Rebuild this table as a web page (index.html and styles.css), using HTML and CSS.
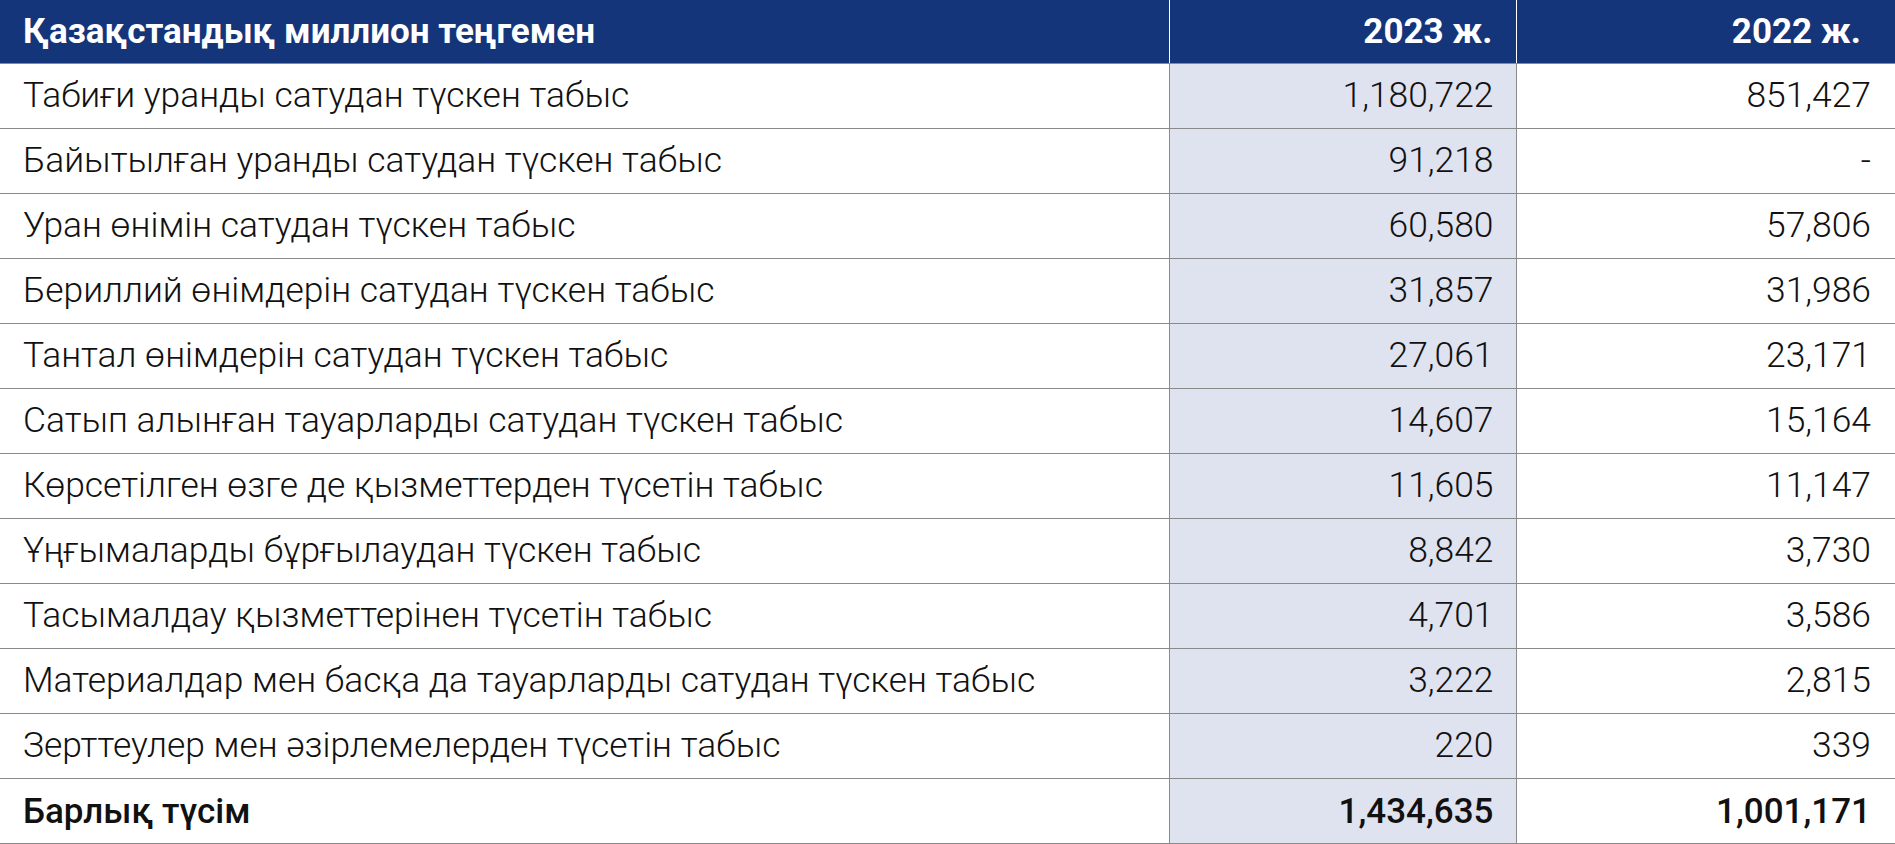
FILE: index.html
```html
<!DOCTYPE html>
<html lang="kk">
<head>
<meta charset="utf-8">
<link rel="stylesheet" href="styles.css">
</head>
<body>
<table class="tbl">
  <colgroup>
    <col class="c-name">
    <col class="c-y1">
    <col class="c-y2">
  </colgroup>
  <thead>
    <tr>
      <th class="name">Қазақстандық миллион теңгемен</th>
      <th class="num y1">2023 ж.</th>
      <th class="num y2">2022 ж.</th>
    </tr>
  </thead>
  <tbody>
    <tr><td class="name">Табиғи уранды сатудан түскен табыс</td><td class="num y1">1,180,722</td><td class="num y2">851,427</td></tr>
    <tr><td class="name">Байытылған уранды сатудан түскен табыс</td><td class="num y1">91,218</td><td class="num y2">-</td></tr>
    <tr><td class="name">Уран өнімін сатудан түскен табыс</td><td class="num y1">60,580</td><td class="num y2">57,806</td></tr>
    <tr><td class="name">Бериллий өнімдерін сатудан түскен табыс</td><td class="num y1">31,857</td><td class="num y2">31,986</td></tr>
    <tr><td class="name">Тантал өнімдерін сатудан түскен табыс</td><td class="num y1">27,061</td><td class="num y2">23,171</td></tr>
    <tr><td class="name">Сатып алынған тауарларды сатудан түскен табыс</td><td class="num y1">14,607</td><td class="num y2">15,164</td></tr>
    <tr><td class="name">Көрсетілген өзге де қызметтерден түсетін табыс</td><td class="num y1">11,605</td><td class="num y2">11,147</td></tr>
    <tr><td class="name">Ұңғымаларды бұрғылаудан түскен табыс</td><td class="num y1">8,842</td><td class="num y2">3,730</td></tr>
    <tr><td class="name">Тасымалдау қызметтерінен түсетін табыс</td><td class="num y1">4,701</td><td class="num y2">3,586</td></tr>
    <tr><td class="name">Материалдар мен басқа да тауарларды сатудан түскен табыс</td><td class="num y1">3,222</td><td class="num y2">2,815</td></tr>
    <tr><td class="name">Зерттеулер мен әзірлемелерден түсетін табыс</td><td class="num y1">220</td><td class="num y2">339</td></tr>
    <tr class="total"><td class="name">Барлық түсім</td><td class="num y1">1,434,635</td><td class="num y2">1,001,171</td></tr>
  </tbody>
</table>
</body>
</html>
```

FILE: styles.css
```css
html, body {
  margin: 0;
  padding: 0;
  background: #ffffff;
}

body {
  font-family: Roboto, "Noto Sans", sans-serif;
  color: #111111;
}

.tbl {
  width: 1895px;
  border-collapse: collapse;
  table-layout: fixed;
}

.c-name { width: 1169px; }
.c-y1 { width: 347px; }
.c-y2 { width: 379px; }

.tbl th {
  height: 63px;
  padding: 0 23px;
  background: #15357a;
  color: #ffffff;
  font-size: 35px;
  font-weight: 700;
  line-height: 1;
  vertical-align: middle;
  border-bottom: 1px solid #8a8a8a;
  text-align: left;
}

.tbl th + th {
  border-left: 1px solid #ffffff;
}

.tbl th.y2 {
  padding-right: 34px;
}

.tbl td {
  height: 64px;
  padding: 0 23px;
  font-size: 35.4px;
  font-weight: 300;
  line-height: 1;
  vertical-align: middle;
  border-bottom: 1px solid #8a8a8a;
  white-space: nowrap;
}

.tbl td + td {
  border-left: 1px solid #8a8a8a;
}

.tbl .num {
  text-align: right;
}

.tbl td.y1 {
  background: #dfe2ef;
  padding-right: 22px;
}

.tbl td.y2 {
  padding-right: 24px;
}

.tbl .total td {
  font-size: 35px;
  font-weight: 500;
}
```
